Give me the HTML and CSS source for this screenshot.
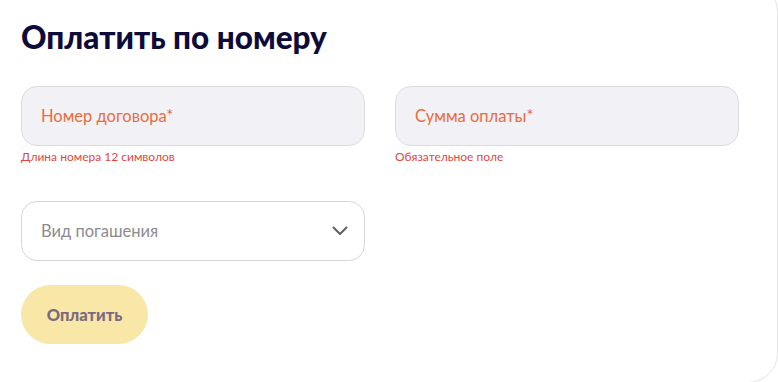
FILE: index.html
```html
<!DOCTYPE html>
<html lang="ru">
<head>
<meta charset="utf-8">
<link rel="stylesheet" href="styles.css">
</head>
<body>
<div class="card">
  <h1 class="title">Оплатить по номеру</h1>
  <div class="grid">
    <div class="field">
      <div class="input input--error"><span class="label">Номер договора*</span></div>
      <div class="error">Длина номера 12 символов</div>
    </div>
    <div class="field">
      <div class="input input--error"><span class="label">Сумма оплаты*</span></div>
      <div class="error">Обязательное поле</div>
    </div>
  </div>
  <div class="grid grid--select">
    <div class="select">
      <span class="placeholder">Вид погашения</span>
      <svg class="chevron" width="16" height="10" viewBox="0 0 16 10"><path d="M1.5 1.5 L8 8 L14.5 1.5" fill="none" stroke="#5f5f66" stroke-width="2" stroke-linecap="round" stroke-linejoin="round"/></svg>
    </div>
  </div>
  <button class="btn">Оплатить</button>
</div>
</body>
</html>
```
FILE: styles.css
```css
html, body {
  margin: 0;
  padding: 0;
  background: #ffffff;
  overflow: hidden;
}
body {
  width: 778px;
  height: 382px;
  font-family: "Lato", "Open Sans", sans-serif;
}
.card {
  box-sizing: border-box;
  width: 808px;
  margin: -18px 0 0 -30px;
  padding: 34px 0 38px 50px;
  border: 1px solid #e4e4e6;
  border-radius: 30px;
  background: #fff;
}
.title {
  margin: 0;
  font-size: 31.5px;
  line-height: 40px;
  font-weight: 900;
  color: #0e0b3a;
  letter-spacing: 0;
}
.grid {
  display: grid;
  grid-template-columns: 344px 344px;
  column-gap: 30px;
  margin-top: 29px;
}
.grid--select {
  margin-top: 36px;
}
.input, .select {
  box-sizing: border-box;
  height: 60px;
  border-radius: 16px;
  display: flex;
  align-items: center;
  padding: 0 19px;
}
.input {
  background: #f2f1f6;
  border: 1px solid #dcdbe0;
}
.label {
  color: #ea6c3c;
  font-size: 16.5px;
}
.error {
  margin-top: 3px;
  font-size: 12px;
  line-height: 16px;
  color: #e2473c;
}
.select {
  background: #fff;
  border: 1px solid #d6d6da;
  justify-content: space-between;
  padding-right: 16px;
}
.placeholder {
  color: #8b8b90;
  font-size: 16.5px;
}
.chevron {
  display: block;
}
.btn {
  display: block;
  margin-top: 24px;
  width: 127px;
  height: 59px;
  border: none;
  border-radius: 30px;
  background: #f8e7a7;
  color: #7a6a7f;
  font-family: inherit;
  font-size: 16.5px;
  font-weight: 900;
  padding: 0;
}
```
